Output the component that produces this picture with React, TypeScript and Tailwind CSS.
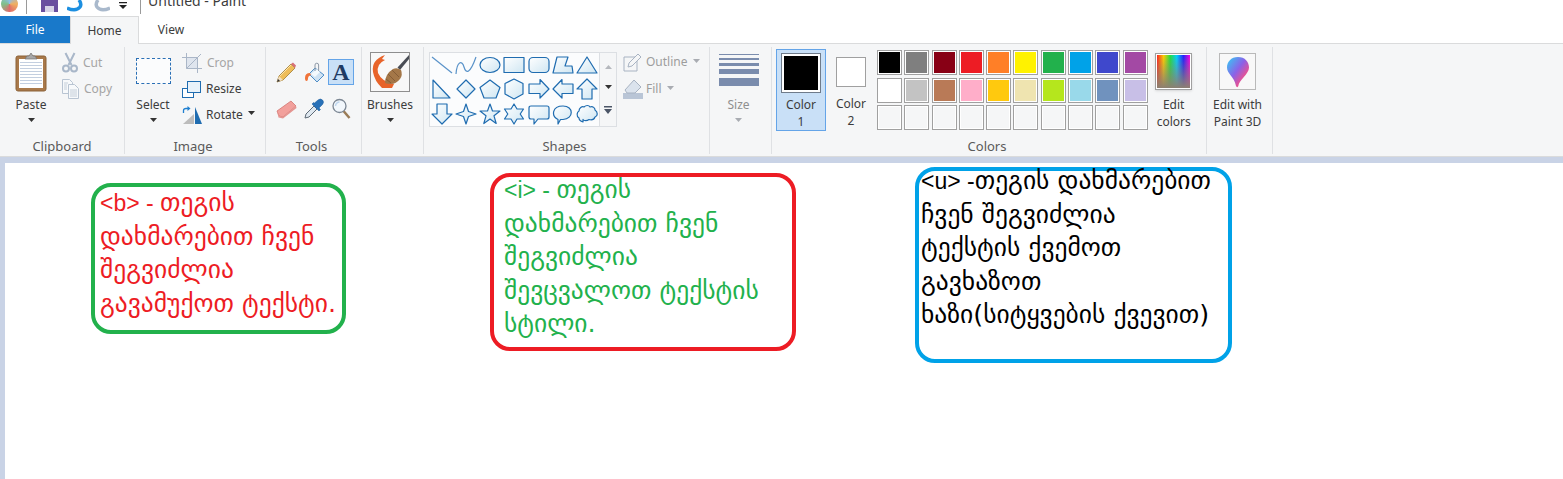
import type { ReactNode } from "react";

const uiFont = { fontFamily: '"Noto Sans", sans-serif' };

function Caret({ muted = false }: { muted?: boolean }) {
  return (
    <svg width="7" height="4" viewBox="0 0 7 4" className="shrink-0">
      <path d="M0 0h7L3.5 4z" fill={muted ? "#a9acb2" : "#333"} />
    </svg>
  );
}

function Group({
  label,
  width,
  labelClass = "",
  children,
}: {
  label?: string;
  width: string;
  labelClass?: string;
  children: ReactNode;
}) {
  return (
    <section className={`${width} flex h-[107px] shrink-0 flex-col border-r border-[#dfe1e4]`}>
      <div className="flex-1">{children}</div>
      <div className={`h-[20px] pt-[3px] text-center text-[13px] leading-[18px] text-[#5a5a5a] ${labelClass}`}>{label}</div>
    </section>
  );
}

function ClipboardIcon() {
  return (
    <svg width="32" height="40" viewBox="0 0 32 40">
      <rect x="1" y="4" width="30" height="35" rx="2" fill="#a9794a" stroke="#8b6238" />
      <rect x="4" y="7" width="24" height="29" fill="#fff" />
      {[10, 13, 16, 19, 22, 25, 28, 31].map((y) => (
        <rect key={y} x="5" y={y} width="22" height="1" fill="#c3cfe0" />
      ))}
      <path d="M10 7l2-3h2l2-3 2 3h2l2 3z" fill="#a7a7a7" stroke="#707070" strokeWidth=".7" />
    </svg>
  );
}

function ScissorsIcon() {
  return (
    <svg width="16" height="21" viewBox="0 0 16 21" fill="none" stroke="#a9b7c9" strokeWidth="2">
      <path d="M3.5 1L9.5 13M12.5 1L6.5 13" />
      <circle cx="4" cy="16.5" r="3" />
      <circle cx="12" cy="16.5" r="3" />
    </svg>
  );
}

function CopyIcon() {
  return (
    <svg width="17" height="20" viewBox="0 0 17 20" fill="#f7f9fb" stroke="#b8c4d2">
      <path d="M.5.5h7l3 3v11H.5z" />
      <path d="M6.5 5.5h6l4 4v10h-10z" />
      <path d="M8 11h7M8 13h7M8 15h7M8 17h7M2 4h4M2 6h3M2 8h3M2 10h3" strokeWidth=".8" />
    </svg>
  );
}

function CropIcon() {
  return (
    <svg width="20" height="20" viewBox="0 0 20 20" fill="none" stroke="#aab6c7">
      <path d="M5 5h10v10H5z" fill="#dfe5ee" strokeWidth="0" />
      <path d="M4.500 0v15.500H20M0 4.500h15.500V20" />
      <path d="M19 1L4.500 15.500" />
    </svg>
  );
}

function ResizeIcon() {
  return (
    <svg width="19" height="17" viewBox="0 0 19 17">
      <rect x=".5" y="7.500" width="11" height="9" fill="#fff" stroke="#1f6cb0" />
      <rect x="5.500" y=".5" width="13" height="11" fill="#e8f2fa" stroke="#1f6cb0" />
    </svg>
  );
}

function RotateIcon() {
  return (
    <svg width="21" height="18" viewBox="0 0 21 18">
      <path d="M1 18L12 8v10z" fill="#bcbcbc" />
      <path d="M13 1l7 17h-7z" fill="#1f6cb0" />
      <path d="M1.500 7V4.500Q1.500 2.500 4 2.500H6" fill="none" stroke="#1f7fd0" strokeWidth="1.300" />
      <path d="M5.500 0l3 2.500-3 2.500z" fill="#1f7fd0" />
    </svg>
  );
}

function PencilIcon() {
  return (
    <svg width="21" height="21" viewBox="0 0 21 21">
      <path d="M1 20l2-6L15 2l4 4L7 18z" fill="#eebd5a" stroke="#a17b32" strokeWidth=".8" />
      <path d="M1 20l2-6 4 4z" fill="#f2dfc0" />
      <path d="M1 20l1-3 2 2z" fill="#333" />
      <path d="M15 2l2-1.500 3 3L19 6z" fill="#d8727a" />
      <path d="M4 14L15 3" stroke="#fbe5ad" strokeWidth="1" />
    </svg>
  );
}

function FillIcon() {
  return (
    <svg width="21" height="21" viewBox="0 0 21 21">
      <path d="M11 6l9 7-7 7-8-8z" fill="#cfe2f3" stroke="#4f8dc6" />
      <path d="M7 12l6-5 3 3-5 5z" fill="#f4f9fd" />
      <path d="M11 9V3a1.800 1.800 0 0 1 3.600 0v6" fill="none" stroke="#8d98a6" strokeWidth="1" />
      <path d="M6 11Q1 11 1 16q0 3 1.500 3 1.500 0 1.500-3 0-2 3-3z" fill="#f0743a" />
    </svg>
  );
}

function EraserIcon() {
  return (
    <svg width="21" height="20" viewBox="0 0 21 20">
      <path d="M1 12L15 2l5 5L7 18l-4-1z" fill="#f2a09c" stroke="#d27671" strokeWidth=".8" />
      <path d="M1 12l2 5 4 1L20 7l.5 2L7 19.500l-4.500-1z" fill="#e59591" />
    </svg>
  );
}

function PickerIcon() {
  return (
    <svg width="21" height="21" viewBox="0 0 21 21">
      <path d="M1 20l1-4 8-8 3 3-8 8z" fill="#dfe8f0" stroke="#5e6a76" />
      <path d="M8 6l7 7 1.500-1.500-1.500-1.500 3.500-3.500q2-2.500 0-4.500t-4.500 0L10.500 5 9.500 4.500z" fill="#2871b8" stroke="#1d5a98" strokeWidth=".5" />
    </svg>
  );
}

function MagnifierIcon() {
  return (
    <svg width="19" height="21" viewBox="0 0 19 21">
      <path d="M11.500 13l6 7" stroke="#9a7c57" strokeWidth="2.500" />
      <circle cx="7.500" cy="8" r="6.500" fill="#f2f7fc" stroke="#7c8794" strokeWidth="1.300" />
      <path d="M3.500 8a4 4 0 0 1 4-4" fill="none" stroke="#bfd6ee" strokeWidth="1.500" />
    </svg>
  );
}

function BrushesIcon() {
  return (
    <svg width="40" height="40" viewBox="0 0 40 40">
      <rect x=".5" y=".5" width="39" height="39" fill="#f8f8f8" stroke="#8e8e8e" />
      <path d="M39 3L27.500 15.500l2.500 2.500L39 7z" fill="#4a4d55" />
      <path d="M15 3Q1 8 3 20q1.500 9 9 16l10 0 2-4Q12 30 8 21 6 12 15 8l-3-1z" fill="#e8642a" />
      <path d="M15 31q0-9 8-14 4-2 8 1 2 5-1 9-4 5-9 5-4 0-6-1z" fill="#a47748" />
      <path d="M18 22l7 7M22 18l7 7M16 27l5 4" stroke="#7d5632" strokeWidth=".8" />
    </svg>
  );
}

function AButton() {
  return (
    <div className="flex h-[26px] w-[26px] items-center justify-center border border-[#64a4e8] bg-[#c9e0f7]">
      <span className="text-[24px] font-bold leading-none text-[#1f3a63]" style={{ fontFamily: '"Liberation Serif", serif' }}>
        A
      </span>
    </div>
  );
}

function ShapeSvg({ children }: { children: ReactNode }) {
  return (
    <svg width="22" height="22" viewBox="0 0 22 22" fill="url(#shapeFill)" stroke="#1f6cb0" strokeWidth="1.200" strokeLinejoin="round">
      <defs>
        <linearGradient id="shapeFill" x1="0" y1="0" x2="1" y2="1">
          <stop offset="0" stopColor="#ffffff" />
          <stop offset="1" stopColor="#cfe6f2" />
        </linearGradient>
      </defs>
      {children}
    </svg>
  );
}

const shapes: ReactNode[] = [
  <path d="M1 3L21 19" fill="none" stroke="#5a93c9" />,
  <path d="M1 20C2 7 7 6 9 13S15 20 21 3" fill="none" stroke="#5a93c9" />,
  <ellipse cx="11" cy="11" rx="10" ry="7.500" />,
  <rect x="1" y="3.500" width="20" height="15" />,
  <rect x="1" y="3.500" width="20" height="15" rx="4" />,
  <path d="M1 19L5 3H16L13 12H20L21 19Z" />,
  <path d="M11 3L21 19H1Z" />,
  <path d="M2 2L19 20H2Z" />,
  <path d="M11 2L20 11L11 20L2 11Z" />,
  <path d="M11 2L21 9.500L17 20H5L1 9.500Z" />,
  <path d="M11 1L20 5.500V16L11 21L2 16V5.500Z" />,
  <path d="M1 6H12V1.500L21 11L12 20V15.500H1Z" />,
  <path d="M21 6H10V1.500L1 11L10 20V15.500H21Z" />,
  <path d="M11 1L21 11H16V21H6V11H1Z" />,
  <path d="M11 21L21 11H16V1H6V11H1Z" />,
  <path d="M11 1L13.500 8.500L21 11L13.500 13.500L11 21L8.500 13.500L1 11L8.500 8.500Z" />,
  <path d="M11 1L13.500 8H21L15 12.800L17.200 20.500L11 16L4.800 20.500L7 12.800L1 8H8.500Z" />,
  <path d="M11 1L14 6H20.500L17.200 11L20.500 16H14L11 21L8 16H1.500L4.800 11L1.500 6H8Z" />,
  <path d="M3 3H19Q21 3 21 5V14Q21 16 19 16H10L6 21V16H3Q1 16 1 14V5Q1 3 3 3Z" />,
  <path d="M6 16.500C-1 13 0 3 11 3C22 3 22 16 11 16.500H8.500L6 21Z" />,
  <path d="M7 19C4 18 3 16 3 15C0 13 1 9 3 8C3 5 6 3 8 4C10 2 13 2 14 4C17 3 19 5 19 7C22 9 22 13 19 14C18 17 15 17 13 16.500C11 18 8 18 7 16.500Z" />,
];

const paletteTop = ["#000000", "#7f7f7f", "#880015", "#ed1c24", "#ff7f27", "#fff200", "#22b14c", "#00a2e8", "#3f48cc", "#a349a4"];
const paletteMid = ["#ffffff", "#c3c3c3", "#b97a57", "#ffaec9", "#ffc90e", "#efe4b0", "#b5e61d", "#99d9ea", "#7092be", "#c8bfe7"];

function Swatch({ color }: { color?: string }) {
  return (
    <div className="h-[25px] w-[25px] border border-[#a0a0a0] bg-white p-px">
      {color ? <div className="h-full w-full" style={{ backgroundColor: color }} /> : <div className="h-full w-full bg-[#f5f6f7]" />}
    </div>
  );
}

function Ribbon() {
  return (
    <div className="flex h-[113px] items-start border-b border-[#dadbdc] bg-[#f5f6f7] pt-[3px] text-[12px] text-[#3c3c3c]">
      <Group label="Clipboard" width="w-[125px]">
        <div className="flex pt-[5px]">
          <div className="ml-[8px] flex w-[46px] flex-col items-center">
            <ClipboardIcon />
            <span className="mt-[5px] leading-[16px]">Paste</span>
            <div className="mt-[5px]">
              <Caret />
            </div>
          </div>
          <div className="ml-[8px] flex flex-col gap-[5px] text-[#a5a5a5]">
            <div className="flex h-[21px] items-center gap-[5px]">
              <ScissorsIcon />
              <span>Cut</span>
            </div>
            <div className="flex h-[21px] items-center gap-[5px]">
              <CopyIcon />
              <span>Copy</span>
            </div>
          </div>
        </div>
      </Group>

      <Group label="Image" width="w-[141px]" labelClass="pr-[4px]">
        <div className="flex pt-[6px]">
          <div className="ml-[8px] flex w-[40px] flex-col items-center">
            <div className="mt-[5px] h-[26px] w-[35px] border border-dashed border-[#2a6fb5] bg-[#fbfcfd]" />
            <span className="mt-[13px] leading-[16px]">Select</span>
            <div className="mt-[5px]">
              <Caret />
            </div>
          </div>
          <div className="ml-[9px] flex flex-col gap-[6px]">
            <div className="flex h-[20px] items-center gap-[5px] text-[#a5a5a5]">
              <CropIcon />
              <span>Crop</span>
            </div>
            <div className="flex h-[20px] items-center gap-[5px]">
              <ResizeIcon />
              <span>Resize</span>
            </div>
            <div className="flex h-[20px] items-center gap-[3px]">
              <RotateIcon />
              <span>Rotate</span>
              <div className="mb-[4px] ml-[2px]">
                <Caret />
              </div>
            </div>
          </div>
        </div>
      </Group>

      <Group label="Tools" width="w-[96px]" labelClass="pr-[4px]">
        <div className="ml-[6px] grid w-[82px] grid-cols-[28px_28px_26px] items-center justify-items-center gap-y-[13px] pt-[12px]">
          <PencilIcon />
          <FillIcon />
          <AButton />
          <EraserIcon />
          <PickerIcon />
          <MagnifierIcon />
        </div>
      </Group>

      <Group width="w-[62px]">
        <div className="flex flex-col items-center pr-[5px] pt-[5px]">
          <BrushesIcon />
          <span className="mt-[5px] leading-[16px]">Brushes</span>
          <div className="mt-[5px]">
            <Caret />
          </div>
        </div>
      </Group>

      <Group label="Shapes" width="w-[286px]" labelClass="pr-[4px]">
        <div className="ml-[5px] flex pt-[5px]">
          <div className="grid h-[75px] w-[171px] grid-cols-7 place-items-center border border-[#dcdfe3] bg-[#fbfcfd]">
            {shapes.map((shape, i) => (
              <ShapeSvg key={i}>{shape}</ShapeSvg>
            ))}
          </div>
          <div className="flex h-[75px] w-[17px] flex-col items-center justify-around border border-l-0 border-[#dcdfe3] py-[4px]">
            <svg width="7" height="4" viewBox="0 0 7 4">
              <path d="M0 4h7L3.500 0z" fill="#b5b8bd" />
            </svg>
            <Caret />
            <svg width="8" height="8" viewBox="0 0 8 8">
              <path d="M0 0h8v1.500H0zM0 3h8L4 8z" fill="#4b5567" />
            </svg>
          </div>
          <div className="ml-[6px] flex flex-col gap-[7px] text-[#9d9d9d]">
            <div className="flex h-[20px] items-center gap-[3px]">
              <svg width="20" height="20" viewBox="0 0 20 20" fill="none" stroke="#a8b3c2">
                <path d="M1 5h11M1 5v14h13V9" />
                <path d="M5 15l1-4 9-9 3 3-9 9z" fill="#f5f6f7" />
              </svg>
              <span>Outline</span>
              <div className="mb-[3px] ml-[2px]">
                <Caret muted />
              </div>
            </div>
            <div className="flex h-[20px] items-center gap-[3px]">
              <svg width="20" height="20" viewBox="0 0 20 20">
                <rect y="14" width="20" height="6" fill="#b9c5d6" />
                <path d="M11 1l7 7-6 6H4l-2-3z" fill="#dbe3ed" stroke="#a8b3c2" />
              </svg>
              <span>Fill</span>
              <div className="mb-[3px] ml-[2px]">
                <Caret muted />
              </div>
            </div>
          </div>
        </div>
      </Group>

      <Group width="w-[62px]">
        <div className="flex flex-col items-center pr-[4px] pt-[7px] text-[#8f8f8f]">
          <div className="flex w-[40px] flex-col">
            <div className="h-px bg-[#7a8cad]" />
            <div className="mt-[3px] h-[2px] bg-[#7a8cad]" />
            <div className="mt-[3px] h-[3px] bg-[#7a8cad]" />
            <div className="mt-[3px] h-[5px] bg-[#7a8cad]" />
            <div className="mt-[4px] h-[8px] bg-[#7a8cad]" />
          </div>
          <span className="mt-[11px] leading-[16px]">Size</span>
          <div className="mt-[5px]">
            <Caret muted />
          </div>
        </div>
      </Group>

      <Group label="Colors" width="w-[435px]" labelClass="pr-[4px]">
        <div className="flex pt-[2px]">
          <div className="ml-[4px] flex h-[82px] w-[50px] flex-col items-center border border-[#64a4e8] bg-[#c9e0f7] pt-[3px]">
            <div className="h-[40px] w-[40px] border border-[#6f7b8a] bg-white p-[2px]">
              <div className="h-full w-full bg-black" />
            </div>
            <span className="mt-[3px] leading-[17px]">Color</span>
            <span className="leading-[17px]">1</span>
          </div>
          <div className="ml-[5px] flex h-[82px] w-[40px] flex-col items-center pt-[8px]">
            <div className="h-[30px] w-[30px] border border-[#a0a0a0] bg-white" />
            <span className="mt-[8px] leading-[17px]">Color</span>
            <span className="leading-[17px]">2</span>
          </div>
          <div className="ml-[6px] mt-[1px] grid grid-cols-[repeat(10,25px)] gap-x-[2.300px] gap-y-[2px]">
            {paletteTop.map((c) => (
              <Swatch key={c} color={c} />
            ))}
            {paletteMid.map((c) => (
              <Swatch key={c} color={c} />
            ))}
            {paletteTop.map((c) => (
              <Swatch key={`empty-${c}`} />
            ))}
          </div>
          <div className="ml-px flex w-[50px] flex-col items-center pt-[4px]">
            <div className="h-[37px] w-[37px] border border-[#a0a0a0] bg-white p-px shadow-sm">
              <div className="h-full w-full bg-[linear-gradient(to_bottom,transparent,#8c8072),linear-gradient(to_right,#ff2020,#ffd000,#20e040,#00d0ff,#2020ff,#ff00e0)]" />
            </div>
            <span className="mt-[6px] leading-[17px]">Edit</span>
            <span className="leading-[17px]">colors</span>
          </div>
        </div>
      </Group>

      <Group width="w-[66px]">
        <div className="flex flex-col items-center pr-[4px] pt-[6px]">
          <div className="flex h-[37px] w-[37px] items-center justify-center border border-[#b9b9b9] bg-[#f8f8f8]">
            <svg width="24" height="32" viewBox="0 0 24 32">
              <defs>
                <linearGradient id="dropFill" x1="0" y1="0" x2="1" y2="1">
                  <stop offset="0" stopColor="#30d0f5" />
                  <stop offset=".45" stopColor="#8a62e8" />
                  <stop offset=".75" stopColor="#f0508c" />
                  <stop offset="1" stopColor="#ffb020" />
                </linearGradient>
              </defs>
              <path d="M12 1C5 1 1 6 1 11.500 1 18 8 20 10 30c.5 1.500 2 1.500 2.300 0C13 24 23 18 23 11.500 23 6 19 1 12 1z" fill="url(#dropFill)" />
            </svg>
          </div>
          <span className="mt-[6px] leading-[17px]">Edit with</span>
          <span className="whitespace-nowrap leading-[17px]">Paint 3D</span>
        </div>
      </Group>
    </div>
  );
}

function TitleBar() {
  return (
    <div className="flex h-[16px] items-start overflow-hidden bg-white text-[#3c3c3c]">
      <div className="-mt-[6px] flex items-center">
        <div className="ml-[1px] h-[16px] w-[17px] rounded-full bg-[conic-gradient(#8fc0e8,#f0b060,#e06a6a,#7fc08a,#8fc0e8)]" />
        <div className="ml-[8px] h-[20px] w-px bg-[#9a9a9a]" />
        <svg className="ml-[14px]" width="17" height="16" viewBox="0 0 17 16">
          <path d="M0 0h17v16H0z" fill="#6a4f9f" />
          <rect x="4" y="10" width="9" height="6" fill="#d7d3e6" />
        </svg>
        <svg className="ml-[9px]" width="17" height="16" viewBox="0 0 17 16" fill="none">
          <path d="M0 12Q9 16 13 11Q15 8 12 4" stroke="#1d8fe0" strokeWidth="3.500" />
        </svg>
        <svg className="ml-[9px]" width="17" height="16" viewBox="0 0 17 16" fill="none">
          <path d="M17 12Q8 16 4 11Q2 8 5 4" stroke="#a9b9cc" strokeWidth="3.500" />
        </svg>
        <svg className="ml-[9px] mt-[2px]" width="8" height="7" viewBox="0 0 8 7">
          <path d="M0 0h8v1.300H0zM0 3h8L4 7z" fill="#222" />
        </svg>
        <div className="ml-[13px] h-[20px] w-px bg-[#9a9a9a]" />
        <span className="ml-[7px] -mt-[6px] whitespace-nowrap text-[14px] leading-[20px]" style={uiFont}>
          Untitled - Paint
        </span>
      </div>
    </div>
  );
}

function Tabs() {
  return (
    <div className="flex h-[28px] items-stretch border-b border-[#dadbdc] bg-white text-[12px] leading-none">
      <div className="flex w-[70px] items-center justify-center bg-[#1979ca] text-white">File</div>
      <div className="-mb-px flex w-[69px] items-center justify-center border-x border-t border-[#dadbdc] bg-[#f5f6f7] text-[#3c3c3c]">Home</div>
      <div className="flex w-[64px] items-center justify-center text-[#3c3c3c]">View</div>
    </div>
  );
}

function Note({
  frame,
  text,
  offset,
  tag,
  lines,
}: {
  frame: string;
  text: string;
  offset: string;
  tag: string;
  lines: string[];
}) {
  return (
    <div className={`absolute rounded-[20px] border-[4px] bg-white ${frame} ${text}`} style={{ fontFamily: '"DejaVu Sans", sans-serif' }}>
      <div className={offset}>
        {lines.map((line, i) => (
          <div key={line} className="h-[33.500px] whitespace-pre text-[25.500px] leading-[33.500px]">
            {i === 0 ? (
              <span className="text-[23px]" style={{ fontFamily: '"Liberation Sans", sans-serif' }}>
                {tag}
              </span>
            ) : null}
            {line}
          </div>
        ))}
      </div>
    </div>
  );
}

export default function App() {
  return (
    <div className="h-[479px] w-[1563px] overflow-hidden bg-white" style={uiFont}>
      <TitleBar />
      <Tabs />
      <Ribbon />
      <div className="h-[6px] bg-[#c9d3e6]" />
      <div className="flex h-[316px]">
        <div className="w-[5px] bg-[#c9d3e6]" />
        <div className="relative flex-1 bg-white">
          <Note
            frame="left-[86px] top-[20px] h-[151px] w-[255px] pl-[5px]"
            text="border-[#22b14c] text-[#ed1c24]"
            offset="-mt-px"
            tag="<b> - "
            lines={["თეგის", "დახმარებით ჩვენ", "შეგვიძლია", "გავამუქოთ ტექსტი."]}
          />
          <Note
            frame="left-[485px] top-[10px] h-[178px] w-[306px] pl-[10px]"
            text="border-[#ed1c24] text-[#22b14c]"
            offset="-mt-[4px]"
            tag="<i> - "
            lines={["თეგის", "დახმარებით ჩვენ", "შეგვიძლია", "შევცვალოთ ტექსტის", "სტილი."]}
          />
          <Note
            frame="left-[910px] top-[4px] h-[196px] w-[317px] pl-[2px]"
            text="border-[#00a2e8] text-black"
            offset="-mt-[7px]"
            tag="<u> -"
            lines={["თეგის დახმარებით", "ჩვენ შეგვიძლია", "ტექსტის ქვემოთ", "გავხაზოთ", "ხაზი(სიტყვების ქვევით)"]}
          />
        </div>
      </div>
    </div>
  );
}
